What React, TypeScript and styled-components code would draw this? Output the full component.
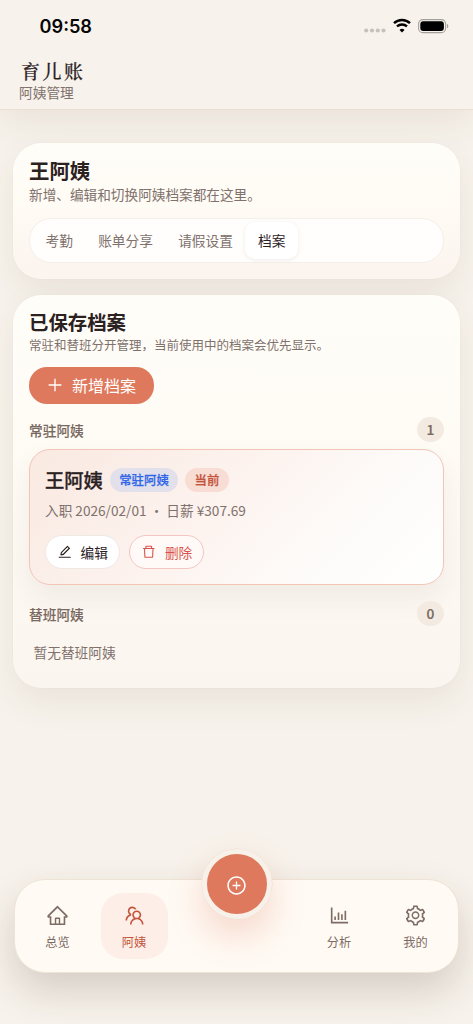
import React from 'react';
import styled, { createGlobalStyle, css } from 'styled-components';
import {
  AiOutlineBarChart,
  AiOutlineDelete,
  AiOutlineEdit,
  AiOutlineHome,
  AiOutlinePlus,
  AiOutlinePlusCircle,
  AiOutlineSetting,
  AiOutlineTeam,
} from 'react-icons/ai';

const color = {
  ink: '#2b211f',
  muted: '#80716c',
  accent: '#df795d',
  accentDeep: '#c4553c',
  danger: '#d9534c',
  page: '#f7f2eb',
};

const GlobalStyle = createGlobalStyle`
  * { box-sizing: border-box; }
  body {
    margin: 0;
    background: ${color.page};
    font-family: 'Noto Sans CJK SC', sans-serif;
    color: ${color.ink};
  }
  button { font-family: inherit; margin: 0; cursor: pointer; }
  h1, h2, h3, p { margin: 0; }
`;

const Screen = styled.div`
  display: flex;
  flex-direction: column;
  height: 1024px;
  overflow: hidden;
  background: ${color.page};
`;

const Header = styled.header`
  height: 110px;
  flex: none;
  background: ${color.page};
  border-bottom: 1px solid #ecdfd1;
  box-shadow: 0 14px 34px rgba(72, 60, 40, 0.08);
`;

const StatusBar = styled.div`
  display: flex;
  align-items: center;
  justify-content: space-between;
  height: 52px;
  padding: 0 24px 0 39.5px;
`;

const Clock = styled.span`
  font: 600 18.2px/24px Inter, sans-serif;
  color: #060606;
`;

const StatusIcons = styled.div`
  display: flex;
  align-items: center;
  height: 18px;
`;

const Brand = styled.div`
  padding: 6px 19px 0;
`;

const BrandName = styled.h1`
  padding-left: 2px;
  font-family: 'Noto Serif CJK SC', 'Noto Sans CJK SC', serif;
  font-size: 19px;
  line-height: 25px;
  font-weight: 500;
  letter-spacing: 2.5px;
  -webkit-text-stroke: 0.2px currentColor;
`;

const BrandSub = styled.p`
  font-size: 13.7px;
  line-height: 18px;
  color: ${color.muted};
`;

const Main = styled.main`
  display: flex;
  flex-direction: column;
  gap: 16px;
  padding: 33px 13px 0;
`;

const Card = styled.section<{ $height: number; $end: string }>`
  height: ${(p) => p.$height}px;
  padding: 13px 16px 0;
  border-radius: 28px;
  background: linear-gradient(180deg, #fffdf8 0%, #fffcf6 35%, ${(p) => p.$end} 100%);
  box-shadow: 0 14px 34px rgba(72, 60, 40, 0.08), 0 0 1px rgba(180, 140, 110, 0.2);
`;

const CardTitle = styled.h2<{ $size: number; $line: number }>`
  font-size: ${(p) => p.$size}px;
  line-height: ${(p) => p.$line}px;
  font-weight: 700;
`;

const CardDesc = styled.p<{ $size: number }>`
  font-size: ${(p) => p.$size}px;
  line-height: 20px;
  color: ${color.muted};
`;

const Tabs = styled.div`
  display: flex;
  height: 45px;
  margin-top: 14px;
  padding: 3px;
  border: 1px solid #f5efe9;
  border-radius: 22px;
  background: #fffefd;
`;

const Tab = styled.button<{ $active?: boolean }>`
  padding: 0 12.6px;
  border: 0;
  border-radius: 10px;
  background: transparent;
  font-size: 13.7px;
  line-height: 35px;
  color: ${color.muted};
  ${(p) =>
    p.$active &&
    css`
      color: ${color.ink};
      background: #fff;
      box-shadow: 0 1px 4px rgba(60, 40, 30, 0.09);
    `}
`;

const PrimaryButton = styled.button`
  display: flex;
  align-items: center;
  gap: 8px;
  height: 37px;
  margin: 12px 0 13px;
  padding: 0 18px 1px 17px;
  border: 0;
  border-radius: 18px;
  background: ${color.accent};
  color: #fff;
  font-size: 16px;
  svg { width: 18px; height: 18px; }
`;

const SectionHead = styled.div`
  display: flex;
  align-items: center;
  justify-content: space-between;
  height: 25px;
`;

const SectionLabel = styled.h3`
  font-size: 13.7px;
  line-height: 20px;
  font-weight: 500;
  color: #79685f;
  -webkit-text-stroke: 0.1px currentColor;
`;

const Count = styled.span`
  width: 27px;
  height: 25px;
  border-radius: 13px;
  background: #f3ebe2;
  font-size: 13.7px;
  line-height: 25px;
  font-weight: 500;
  text-align: center;
  color: #79685f;
  -webkit-text-stroke: 0.2px currentColor;
`;

const Record = styled.article`
  height: 136px;
  margin: 7px 0 16px;
  padding: 17px 15px 0;
  border: 1px solid #f3c5b7;
  border-radius: 21px;
  background: linear-gradient(135deg, #f9e9e1 0%, #fdf3ef 45%, #fdfaf8 68%, #ffffff 100%);
  box-shadow: 0 12px 28px rgba(72, 52, 40, 0.07);
`;

const RecordTop = styled.div`
  display: flex;
  align-items: center;
  gap: 7px;
  height: 26px;
`;

const RecordName = styled.h3`
  font-size: 19.3px;
  line-height: 26px;
  font-weight: 500;
  -webkit-text-stroke: 0.3px currentColor;
`;

const Tag = styled.span<{ $fg: string; $bg: string }>`
  height: 24px;
  padding: 0 9.4px;
  border-radius: 12px;
  font-size: 12.4px;
  line-height: 24px;
  font-weight: 500;
  -webkit-text-stroke: 0.25px currentColor;
  color: ${(p) => p.$fg};
  background: ${(p) => p.$bg};
`;

const Meta = styled.p`
  margin-top: 6px;
  font-size: 13.65px;
  line-height: 22px;
  color: ${color.muted};
  white-space: nowrap;
`;

const Actions = styled.div`
  display: flex;
  gap: 9.5px;
  margin-top: 14px;
`;

const Action = styled.button<{ $danger?: boolean }>`
  display: flex;
  align-items: center;
  gap: 8px;
  height: 34px;
  padding: 0 11px 1px;
  border: 1px solid ${(p) => (p.$danger ? '#f3c6c1' : '#efe9e4')};
  border-radius: 17px;
  background: ${(p) => (p.$danger ? '#fffaf8' : '#fff')};
  color: ${(p) => (p.$danger ? color.danger : color.ink)};
  font-size: 13.7px;
  svg { width: 15.5px; height: 15.5px; margin-top: 1px; }
`;

const Empty = styled.p`
  margin: 16px 0 0 4.5px;
  font-size: 13.7px;
  line-height: 20px;
  color: ${color.muted};
`;

const NavBar = styled.nav`
  position: relative;
  display: grid;
  grid-template-columns: 67px 67px 1fr 67px 67px;
  column-gap: 9.5px;
  flex: none;
  height: 94px;
  margin: auto 14px 51px;
  padding: 13px 9px 0;
  border: 1px solid #efe3d5;
  border-radius: 31px;
  background: #fffaf4;
  box-shadow: 0 18px 38px rgba(60, 46, 34, 0.18);
`;

const NavItem = styled.button<{ $active?: boolean }>`
  display: flex;
  flex-direction: column;
  align-items: center;
  height: 66px;
  padding: 10px 0 0;
  border: 0;
  border-radius: 22px;
  background: ${(p) => (p.$active ? '#fdeee7' : 'transparent')};
  color: ${(p) => (p.$active ? color.accentDeep : '#7d6b64')};
  font-size: 12.2px;
  line-height: 18px;
  svg { width: 23px; height: 23px; margin: 1px 0 6px; }
`;

const AddButton = styled.button`
  position: absolute;
  top: -31px;
  left: 50%;
  display: flex;
  align-items: center;
  justify-content: center;
  width: 70px;
  height: 70px;
  padding: 2px 0 0;
  transform: translateX(-50%);
  border: 5px solid #f7f1e9;
  border-radius: 50%;
  background: ${color.accent};
  color: #fff;
  box-shadow: 0 0 0 0.5px #f0ded2, 0 16px 34px rgba(223, 121, 93, 0.27);
  svg { width: 21px; height: 21px; }
`;

const SignalDots = () => (
  <svg width="22" height="18" viewBox="0 0 22 18" fill="#c6c1ba">
    {[2.2, 8, 13.8, 19.5].map((x) => (
      <circle key={x} cx={x} cy="13.5" r="2.1" />
    ))}
  </svg>
);

const StatusSvg = styled.svg`
  margin-left: 7px;
`;

const Wifi = () => (
  <StatusSvg width="18" height="18" viewBox="0 0 18 18" fill="none" stroke="#000">
    <path d="M1 6.1a11.7 11.7 0 0 1 16 0" strokeWidth="2.5" />
    <path d="M4 9.4a7.4 7.4 0 0 1 10 0" strokeWidth="2.4" />
    <path d="M9 15.5 6.5 12.9a3.8 3.8 0 0 1 5 0Z" fill="#000" stroke="none" />
  </StatusSvg>
);

const Battery = () => (
  <StatusSvg width="31" height="18" viewBox="0 0 31 18">
    <rect x=".6" y="2.6" width="27" height="13" rx="4.2" fill="none" stroke="#a4a09b" strokeWidth="1.1" />
    <rect x="2.3" y="4.2" width="23.6" height="9.8" rx="2.9" fill="#000" />
    <path d="M29 7.1v4.1c.8-.3 1.3-1.1 1.3-2s-.5-1.8-1.3-2.1Z" fill="#a4a09b" />
  </StatusSvg>
);

const tabs = ['考勤', '账单分享', '请假设置', '档案'];

export default function App() {
  return (
    <Screen>
      <GlobalStyle />
      <Header>
        <StatusBar>
          <Clock>09:58</Clock>
          <StatusIcons>
            <SignalDots />
            <Wifi />
            <Battery />
          </StatusIcons>
        </StatusBar>
        <Brand>
          <BrandName>育儿账</BrandName>
          <BrandSub>阿姨管理</BrandSub>
        </Brand>
      </Header>

      <Main>
        <Card $height={136} $end="#fcf4ee">
          <CardTitle $size={20.4} $line={28}>王阿姨</CardTitle>
          <CardDesc $size={13.65}>新增、编辑和切换阿姨档案都在这里。</CardDesc>
          <Tabs>
            {tabs.map((label) => (
              <Tab key={label} $active={label === '档案'}>
                {label}
              </Tab>
            ))}
          </Tabs>
        </Card>

        <Card $height={393} $end="#fbf5ef">
          <CardTitle $size={19.4} $line={27}>已保存档案</CardTitle>
          <CardDesc $size={12.5}>常驻和替班分开管理，当前使用中的档案会优先显示。</CardDesc>
          <PrimaryButton>
            <AiOutlinePlus />
            新增档案
          </PrimaryButton>
          <SectionHead>
            <SectionLabel>常驻阿姨</SectionLabel>
            <Count>1</Count>
          </SectionHead>
          <Record>
            <RecordTop>
              <RecordName>王阿姨</RecordName>
              <Tag $fg="#2f66e8" $bg="#e2e1eb">常驻阿姨</Tag>
              <Tag $fg="#c4553c" $bg="#f7ddd4">当前</Tag>
            </RecordTop>
            <Meta>入职 2026/02/01 ・ 日薪 ¥307.69</Meta>
            <Actions>
              <Action>
                <AiOutlineEdit />
                编辑
              </Action>
              <Action $danger>
                <AiOutlineDelete />
                删除
              </Action>
            </Actions>
          </Record>
          <SectionHead>
            <SectionLabel>替班阿姨</SectionLabel>
            <Count>0</Count>
          </SectionHead>
          <Empty>暂无替班阿姨</Empty>
        </Card>
      </Main>

      <NavBar>
        <NavItem>
          <AiOutlineHome />
          总览
        </NavItem>
        <NavItem $active>
          <AiOutlineTeam />
          阿姨
        </NavItem>
        <span />
        <NavItem>
          <AiOutlineBarChart />
          分析
        </NavItem>
        <NavItem>
          <AiOutlineSetting />
          我的
        </NavItem>
        <AddButton aria-label="新增">
          <AiOutlinePlusCircle />
        </AddButton>
      </NavBar>
    </Screen>
  );
}
